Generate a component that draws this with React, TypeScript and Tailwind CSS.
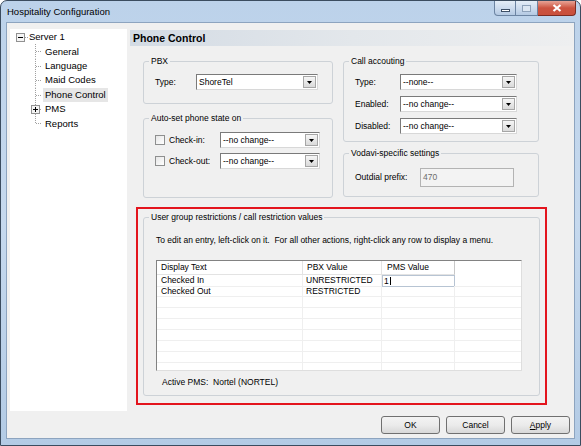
import type { ReactNode } from "react";

function Arrow() {
  return (
    <svg width="5" height="3" viewBox="0 0 5 3">
      <path d="M0 0h5L2.5 3z" fill="#000" />
    </svg>
  );
}

function Combo({ value, className }: { value: string; className: string }) {
  return (
    <div
      className={`flex h-[16px] items-stretch border border-t-[#7a7a7a] border-l-[#7a7a7a] border-r-[#d8d8d8] border-b-[#d8d8d8] bg-white ${className}`}
    >
      <span className="flex-1 truncate pl-[2px] leading-[14px]">{value}</span>
      <span className="m-px flex w-[13px] items-center justify-center border border-[#a6a6a6] bg-gradient-to-b from-[#f6f6f6] to-[#dadada]">
        <Arrow />
      </span>
    </div>
  );
}

function Group({ label, className, children }: { label: string; className: string; children: ReactNode }) {
  return (
    <fieldset className={`rounded-[3px] border border-[#cdd2d7] ${className}`}>
      <legend className="ml-[5px] px-[2px] leading-[11px]">{label}</legend>
      {children}
    </fieldset>
  );
}

function Check() {
  return <span className="h-[10px] w-[10px] shrink-0 border border-[#8e8f8f] bg-gradient-to-br from-[#e6e6e6] to-white" />;
}

function Expander({ open }: { open?: boolean }) {
  return (
    <svg width="9" height="9" viewBox="0 0 9 9" className="shrink-0">
      <rect x="0.5" y="0.5" width="8" height="8" fill="#f4f4f4" stroke="#919191" />
      <path d="M2 4.5h5" stroke="#000" />
      {!open && <path d="M4.5 2v5" stroke="#000" />}
    </svg>
  );
}

function Branch({ last, expander }: { last?: boolean; expander?: boolean }) {
  return (
    <svg width="16" height="14.4" viewBox="0 0 16 14.4" className="ml-[21px] shrink-0">
      <path d={last ? "M4.5 0v7.2" : "M4.5 0v14.4"} stroke="#a0a0a0" strokeDasharray="1 1" />
      <path d="M5 7.5h6" stroke="#a0a0a0" strokeDasharray="1 1" />
      {expander && (
        <g transform="translate(0 3)">
          <rect x="0.5" y="0.5" width="8" height="8" fill="#f4f4f4" stroke="#919191" />
          <path d="M2 4.5h5M4.5 2v5" stroke="#000" />
        </g>
      )}
    </svg>
  );
}

const nodes = [
  { name: "General" },
  { name: "Language" },
  { name: "Maid Codes" },
  { name: "Phone Control", selected: true },
  { name: "PMS", expander: true },
  { name: "Reports", last: true },
];

const rows = [
  { text: "Checked In", pbx: "UNRESTRICTED", pms: "1", editing: true },
  { text: "Checked Out", pbx: "RESTRICTED", pms: "" },
  ...Array.from({ length: 8 }, () => ({ text: "", pbx: "", pms: "" })),
];

function Button({ children }: { children: ReactNode }) {
  return (
    <button className="h-[18px] w-[59px] rounded-[3px] border border-[#707070] bg-gradient-to-b from-[#f3f3f3] via-[#ebebeb] to-[#d8d8d8] leading-[16px]">
      {children}
    </button>
  );
}

export default function App() {
  return (
    <div className="h-[446px] w-[581px] overflow-hidden bg-white font-['Liberation_Sans',Arial,sans-serif] text-[8.5px] text-black">
      <div className="flex h-full flex-col rounded-t-[7px] border border-[#3b4c5f] bg-gradient-to-b from-[#bcd2ea] via-[#c6d9ee] to-[#b3cbe5]">
        {/* title bar */}
        <div className="flex h-[21px] shrink-0 items-start">
          <span className="ml-[6px] mt-[5px] text-[9.5px] leading-[12px]">Hospitality Configuration</span>
          <div className="ml-auto mr-[4px] flex">
            <span className="flex h-[15px] w-[22px] items-end justify-center rounded-bl-[4px] border border-t-0 border-[#6c84a2] bg-gradient-to-b from-[#e4edf7] via-[#cddcee] to-[#b4c9e2] pb-[3px]">
              <span className="h-[3px] w-[9px] border border-[#3d4f66] bg-white" />
            </span>
            <span className="flex h-[15px] w-[22px] items-center justify-center border border-l-0 border-t-0 border-[#6c84a2] bg-gradient-to-b from-[#e4edf7] via-[#cddcee] to-[#b4c9e2]">
              <span className="h-[7px] w-[9px] border border-[#8ea2ba] bg-[#dbe6f2]" />
            </span>
            <span className="flex h-[15px] w-[38px] items-center justify-center rounded-br-[4px] border border-l-0 border-t-0 border-[#7d2c22] bg-gradient-to-b from-[#e7a396] via-[#cc5340] to-[#c9503c]">
              <svg width="10" height="8" viewBox="0 0 10 8">
                <path d="M1.5 1l7 6M8.5 1l-7 6" stroke="#fff" strokeWidth="2.2" />
              </svg>
            </span>
          </div>
        </div>

        {/* client */}
        <div className="mx-[5px] flex h-[417px] shrink-0 border border-[#8da4bf] bg-[#f0f0f0]">
          {/* tree */}
          <div className="ml-[3px] mt-[6px] h-[382px] w-[117px] bg-white pt-px text-[9.5px]">
            <div className="flex h-[14.4px] items-center">
              <span className="ml-[6px] flex items-center">
                <Expander open />
              </span>
              <span className="h-px w-[3px] border-t border-dotted border-[#a0a0a0]" />
              <span className="ml-[1px] leading-[12px]">Server 1</span>
            </div>
            {nodes.map((n) => (
              <div key={n.name} className="flex h-[14.4px] items-center">
                <Branch last={n.last} expander={n.expander} />
                <span className={`-ml-[4px] px-[2px] leading-[14px] ${n.selected ? "bg-[#e6e6e6]" : ""}`}>{n.name}</span>
              </div>
            ))}
          </div>

          {/* page */}
          <div className="ml-[3px] mt-[7px] flex w-[443px] flex-col">
            <div className="h-[16px] shrink-0 bg-gradient-to-r from-[#d3dbe4] via-[#e3e7eb] to-[#eeeff0] pl-[3px] text-[10.5px] font-bold leading-[16px]">
              Phone Control
            </div>

            <div className="mt-[10px] flex">
              <div className="ml-[13px] flex w-[190px] flex-col">
                <Group label="PBX" className="h-[48px]">
                  <div className="ml-[11px] mt-[7px] flex items-center">
                    <span className="w-[41px]">Type:</span>
                    <Combo value="ShoreTel" className="w-[122px]" />
                  </div>
                </Group>
                <Group label="Auto-set phone state on" className="mt-[9px] h-[85px]">
                  <div className="ml-[11px] mt-[8px] flex flex-col gap-[5px]">
                    {["Check-in:", "Check-out:"].map((l) => (
                      <div key={l} className="flex items-center">
                        <Check />
                        <span className="ml-[4px] w-[51px]">{l}</span>
                        <Combo value="--no change--" className="w-[100px]" />
                      </div>
                    ))}
                  </div>
                </Group>
              </div>

              <div className="ml-[10px] flex w-[196px] flex-col">
                <Group label="Call accouting" className="h-[86px]">
                  <div className="ml-[11px] mt-[7px] flex flex-col gap-[6px]">
                    {[
                      ["Type:", "--none--"],
                      ["Enabled:", "--no change--"],
                      ["Disabled:", "--no change--"],
                    ].map(([l, v]) => (
                      <div key={l} className="flex items-center">
                        <span className="w-[45px]">{l}</span>
                        <Combo value={v} className="w-[117px]" />
                      </div>
                    ))}
                  </div>
                </Group>
                <Group label="Vodavi-specific settings" className="mt-[6px] h-[49px]">
                  <div className="ml-[11px] mt-[9px] flex items-center">
                    <span className="w-[65px]">Outdial prefix:</span>
                    <span className="h-[19px] w-[94px] border border-[#b3b3b3] bg-[#f3f3f3] pl-[2px] leading-[17px] text-[#6d6d6d]">470</span>
                  </div>
                </Group>
              </div>
            </div>

            {/* highlighted region */}
            <div className="ml-[6px] mt-[9px] h-[198px] w-[411px] border-2 border-[#e3141d]">
              <Group label="User group restrictions / call restriction values" className="ml-[5px] mt-[3px] h-[184px] w-[397px]">
                <div className="ml-[12px] mt-[12px] leading-[11px] whitespace-pre">
                  {"To edit an entry, left-click on it.  For all other actions, right-click any row to display a menu."}
                </div>
                <div className="ml-[12px] mt-[14px] h-[111px] w-[366px] overflow-hidden border border-t-[#828282] border-l-[#828282] border-r-[#dedede] border-b-[#dedede] bg-white">
                  <div className="grid h-[14px] grid-cols-[146px_79px_73px_1fr] leading-[13px]">
                    <span className="border-b border-r border-[#e3e3e3] pl-[4px]">Display Text</span>
                    <span className="border-b border-r border-[#e3e3e3] pl-[4px]">PBX Value</span>
                    <span className="border-b border-r border-r-[#c8c8c8] border-b-[#e3e3e3] pl-[5px]">PMS Value</span>
                    <span />
                  </div>
                  {rows.map((r, i) => (
                    <div key={i} className="grid h-[11px] grid-cols-[146px_79px_73px_1fr] leading-[10px]">
                      <span className="border-b border-r border-[#efefef] pl-[4px]">{r.text}</span>
                      <span className="border-b border-r border-[#efefef] pl-[3px]">{r.pbx}</span>
                      {r.editing ? (
                        <span className="flex items-center border border-[#b7c4d3] pl-[1px]">
                          {r.pms}
                          <span className="ml-px h-[8px] w-px bg-black" />
                        </span>
                      ) : (
                        <span className="border-b border-r border-[#efefef]">{r.pms}</span>
                      )}
                      <span className="border-b border-[#efefef]" />
                    </div>
                  ))}
                </div>
                <div className="ml-[18px] mt-[6px] leading-[11px] whitespace-pre">{"Active PMS:  Nortel (NORTEL)"}</div>
              </Group>
            </div>

            <div className="mr-[3px] mt-[11px] flex justify-end gap-[6px]">
              <Button>OK</Button>
              <Button>Cancel</Button>
              <Button>
                <span className="underline">A</span>pply
              </Button>
            </div>
          </div>
        </div>
      </div>
    </div>
  );
}
